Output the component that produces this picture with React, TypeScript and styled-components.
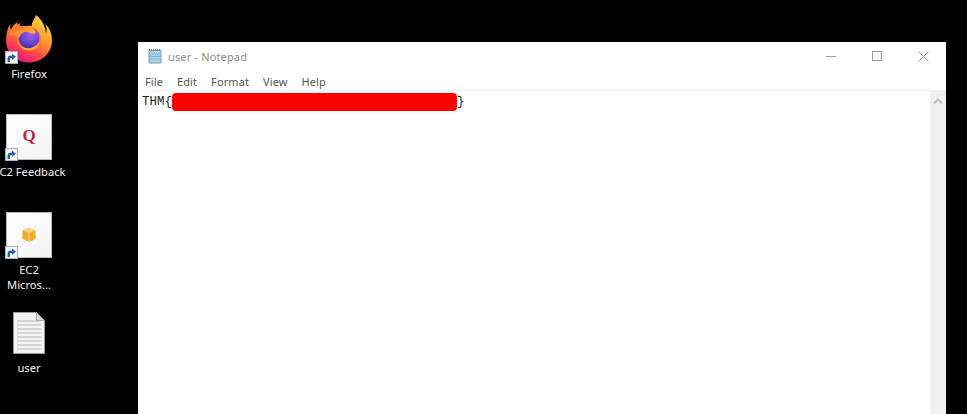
import React from "react";
import styled, { createGlobalStyle } from "styled-components";

const Global = createGlobalStyle`
  html, body { margin: 0; padding: 0; background: #000; }
  #root { width: 967px; height: 414px; overflow: hidden; }
`;

const Desktop = styled.div`
  width: 967px;
  height: 414px;
  background: #000;
  display: flex;
  overflow: hidden;
  font-family: "Noto Sans", "Open Sans", sans-serif;
`;

const IconColumn = styled.div`
  width: 58px;
  margin-right: 80px;
  flex: none;
  display: flex;
  flex-direction: column;
  align-items: center;
`;

const DesktopIcon = styled.div<{ $top: number }>`
  width: 58px;
  margin-top: ${(p) => p.$top}px;
  display: flex;
  flex-direction: column;
  align-items: center;
`;

const IconSlot = styled.div<{ $h: number }>`
  position: relative;
  width: 46px;
  height: ${(p) => p.$h}px;
  display: flex;
  align-items: center;
  justify-content: center;
`;

const Tile = styled.div`
  width: 46px;
  height: 46px;
  box-sizing: border-box;
  background: linear-gradient(135deg, #ffffff, #f3f3f3);
  border: 1px solid #b9b9b9;
  display: flex;
  align-items: center;
  justify-content: center;
`;

const QLetter = styled.span`
  font-family: "Liberation Serif", serif;
  font-weight: 700;
  font-size: 17px;
  line-height: 18px;
  color: #c8203a;
  margin-top: -2px;
`;

const ShortcutBadge = styled.div`
  position: absolute;
  left: -1px;
  bottom: -1px;
  width: 13px;
  height: 13px;
  box-sizing: border-box;
  background: #f1f1f1;
  border: 1px solid #a9b4c2;
  display: flex;
  align-items: center;
  justify-content: center;
`;

const IconLabel = styled.div<{ $gap: number; $shift?: number }>`
  width: 72px;
  margin-top: ${(p) => p.$gap}px;
  margin-left: ${(p) => p.$shift ?? 0}px;
  color: #f4f4f4;
  font-size: 11.2px;
  line-height: 15px;
  text-align: center;
  white-space: nowrap;
  flex: none;
`;

const NotepadWindow = styled.div`
  width: 808px;
  height: 372px;
  margin-top: 42px;
  flex: none;
  background: #fff;
  display: flex;
  flex-direction: column;
  overflow: hidden;
`;

const TitleBar = styled.div`
  height: 30px;
  box-sizing: border-box;
  padding: 0 0 2px 9px;
  flex: none;
  display: flex;
  align-items: center;
`;

const WindowTitle = styled.span`
  margin-left: 5px;
  font-size: 11px;
  color: #8b8b8b;
  letter-spacing: 0.15px;
`;

const WindowControls = styled.div`
  margin-left: auto;
  display: flex;
  align-items: center;
`;

const ControlButton = styled.div`
  width: 46px;
  height: 28px;
  display: flex;
  align-items: center;
  justify-content: center;
`;

const MenuBar = styled.div`
  height: 18px;
  flex: none;
  display: flex;
  align-items: center;
  padding-left: 7px;
  gap: 14px;
  border-bottom: 1px solid #f0f0f0;
`;

const MenuItem = styled.span`
  font-size: 11px;
  letter-spacing: 0.1px;
  color: #555;
`;

const EditArea = styled.div`
  flex: 1;
  display: flex;
  min-height: 0;
`;

const TextPane = styled.div`
  flex: 1;
  padding: 2px 4px;
  font-family: "Liberation Mono", "DejaVu Sans Mono", monospace;
  font-size: 12.5px;
  line-height: 18px;
  color: #222;
  white-space: pre;
`;

const Redacted = styled.span`
  display: inline-block;
  width: 285px;
  height: 18px;
  vertical-align: top;
  background: #ff0000;
  border-radius: 4px;
`;

const ScrollBar = styled.div`
  width: 16px;
  flex: none;
  background: #f0f0f0;
  display: flex;
  justify-content: center;
  padding-top: 7px;
  box-sizing: border-box;
`;

const Shortcut = () => (
  <ShortcutBadge>
    <svg width="11" height="11" viewBox="0 0 11 11">
      <rect x="1" y="1" width="9" height="9" fill="#fff" />
      <path d="M1.5 10V6.5C1.5 4.5 3 3.5 5 3.5H6V1.5L10 4.8 6 8V6H5.2C4.4 6 4 6.6 4 7.4V10Z" fill="#2a62a8" />
    </svg>
  </ShortcutBadge>
);

const FirefoxLogo = () => (
  <svg width="46" height="48" viewBox="0 0 46 48">
    <defs>
      <linearGradient id="ffBody" x1="0.8" y1="0.05" x2="0.3" y2="1">
        <stop offset="0" stopColor="#ffd23a" />
        <stop offset="0.4" stopColor="#ff9a2a" />
        <stop offset="0.75" stopColor="#ff3d4e" />
        <stop offset="1" stopColor="#e31587" />
      </linearGradient>
      <linearGradient id="ffHead" x1="0" y1="0" x2="1" y2="1">
        <stop offset="0" stopColor="#ff5a2a" />
        <stop offset="0.6" stopColor="#ff9a2e" />
        <stop offset="1" stopColor="#ffc53a" />
      </linearGradient>
      <radialGradient id="ffGlobe" cx="0.6" cy="0.3" r="0.75">
        <stop offset="0" stopColor="#a65ef0" />
        <stop offset="0.6" stopColor="#6a45d0" />
        <stop offset="1" stopColor="#3f2da8" />
      </radialGradient>
    </defs>
    <path
      d="M30 0C28 5 25 8 26 11 20 10 14 11 11 14 10 11 11 9 12 7 8 9 6 12 5 15 4 13 4 11 4.5 9 1.5 13 0 19 0 25 0 38 10 47.5 23 47.5S46 38 46 25C46 18 43 12 39 9 41 13 41 16 40 18 39 10 35 4 30 0Z"
      fill="url(#ffBody)"
    />
    <circle cx="23" cy="24" r="12" fill="#ff7a2e" />
    <circle cx="23" cy="23" r="10.5" fill="url(#ffGlobe)" />
    <path d="M12 29C16 34 27 36 33 27 31 37 18 38 12 29Z" fill="#ffb03a" />
    <path
      d="M3 21C5 15 9 10 14 8 13 11 15 12 20 11.5 25 11 29 14 30 18 27 19.5 24 18 21 17 18 16 15 18 13 23 9 19 6 19 3 21Z"
      fill="url(#ffHead)"
    />
  </svg>
);

const AwsCube = () => (
  <svg width="16" height="16" viewBox="0 0 16 16">
    <path d="M8 1 14.5 3.5V12L8 15 1.5 12V3.5Z" fill="#f3a82c" />
    <path d="M8 1 14.5 3.5 8 6 1.5 3.5Z" fill="#f8d27a" />
    <path d="M8 6V15" stroke="#fbe3ad" strokeWidth="0.8" />
  </svg>
);

const TextFileIcon = () => (
  <svg width="32" height="42" viewBox="0 0 32 42">
    <path d="M.5.5H23.5L31.5 8.5V41.5H.5Z" fill="#f3f3f3" stroke="#9a9a9a" />
    <path d="M23.5.5V8.5H31.5Z" fill="#d8d8d8" stroke="#a5a5a5" />
    {[9, 13, 17, 21, 25, 29, 33, 37].map((y) => (
      <path key={y} d={`M4 ${y}H28`} stroke="#b5b5b5" strokeWidth="1" />
    ))}
  </svg>
);

const NotepadIcon = () => (
  <svg width="16" height="16" viewBox="0 0 16 16">
    <path d="M2 2.5H14V15H2Z" fill="#a9d3e6" stroke="#7f9aa8" />
    <path d="M3 6H13M3 8.5H13M3 11H13" stroke="#7fb3cb" />
    <path d="M2.5 2.5V1M4.5 2.5V1M6.5 2.5V1M8.5 2.5V1M10.5 2.5V1M12.5 2.5V1" stroke="#777" />
  </svg>
);

export default function App() {
  return (
    <>
      <Global />
      <Desktop>
        <IconColumn>
          <DesktopIcon $top={15}>
            <IconSlot $h={48}>
              <FirefoxLogo />
              <Shortcut />
            </IconSlot>
            <IconLabel $gap={3}>Firefox</IconLabel>
          </DesktopIcon>
          <DesktopIcon $top={33}>
            <IconSlot $h={46}>
              <Tile>
                <QLetter>Q</QLetter>
              </Tile>
              <Shortcut />
            </IconSlot>
            <IconLabel $gap={4} $shift={7}>C2 Feedback</IconLabel>
          </DesktopIcon>
          <DesktopIcon $top={33}>
            <IconSlot $h={46}>
              <Tile>
                <AwsCube />
              </Tile>
              <Shortcut />
            </IconSlot>
            <IconLabel $gap={4}>EC2</IconLabel>
            <IconLabel $gap={0}>Micros...</IconLabel>
          </DesktopIcon>
          <DesktopIcon $top={20}>
            <IconSlot $h={42}>
              <TextFileIcon />
            </IconSlot>
            <IconLabel $gap={6}>user</IconLabel>
          </DesktopIcon>
        </IconColumn>
        <NotepadWindow>
          <TitleBar>
            <NotepadIcon />
            <WindowTitle>user - Notepad</WindowTitle>
            <WindowControls>
              <ControlButton>
                <svg width="10" height="10" viewBox="0 0 10 10">
                  <path d="M0 5.5H10" stroke="#9a9a9a" />
                </svg>
              </ControlButton>
              <ControlButton>
                <svg width="10" height="10" viewBox="0 0 10 10">
                  <rect x=".5" y=".5" width="9" height="9" fill="none" stroke="#9a9a9a" />
                </svg>
              </ControlButton>
              <ControlButton>
                <svg width="11" height="11" viewBox="0 0 11 11">
                  <path d="M.5.5 10.5 10.5M10.5.5.5 10.5" stroke="#9a9a9a" />
                </svg>
              </ControlButton>
            </WindowControls>
          </TitleBar>
          <MenuBar>
            <MenuItem>File</MenuItem>
            <MenuItem>Edit</MenuItem>
            <MenuItem>Format</MenuItem>
            <MenuItem>View</MenuItem>
            <MenuItem>Help</MenuItem>
          </MenuBar>
          <EditArea>
            <TextPane>
              THM{"{"}
              <Redacted />
              {"}"}
            </TextPane>
            <ScrollBar>
              <svg width="10" height="6" viewBox="0 0 10 6">
                <path d="M1 5.5 5 1.5 9 5.5" fill="none" stroke="#bdbdbd" strokeWidth="2" />
              </svg>
            </ScrollBar>
          </EditArea>
        </NotepadWindow>
      </Desktop>
    </>
  );
}
